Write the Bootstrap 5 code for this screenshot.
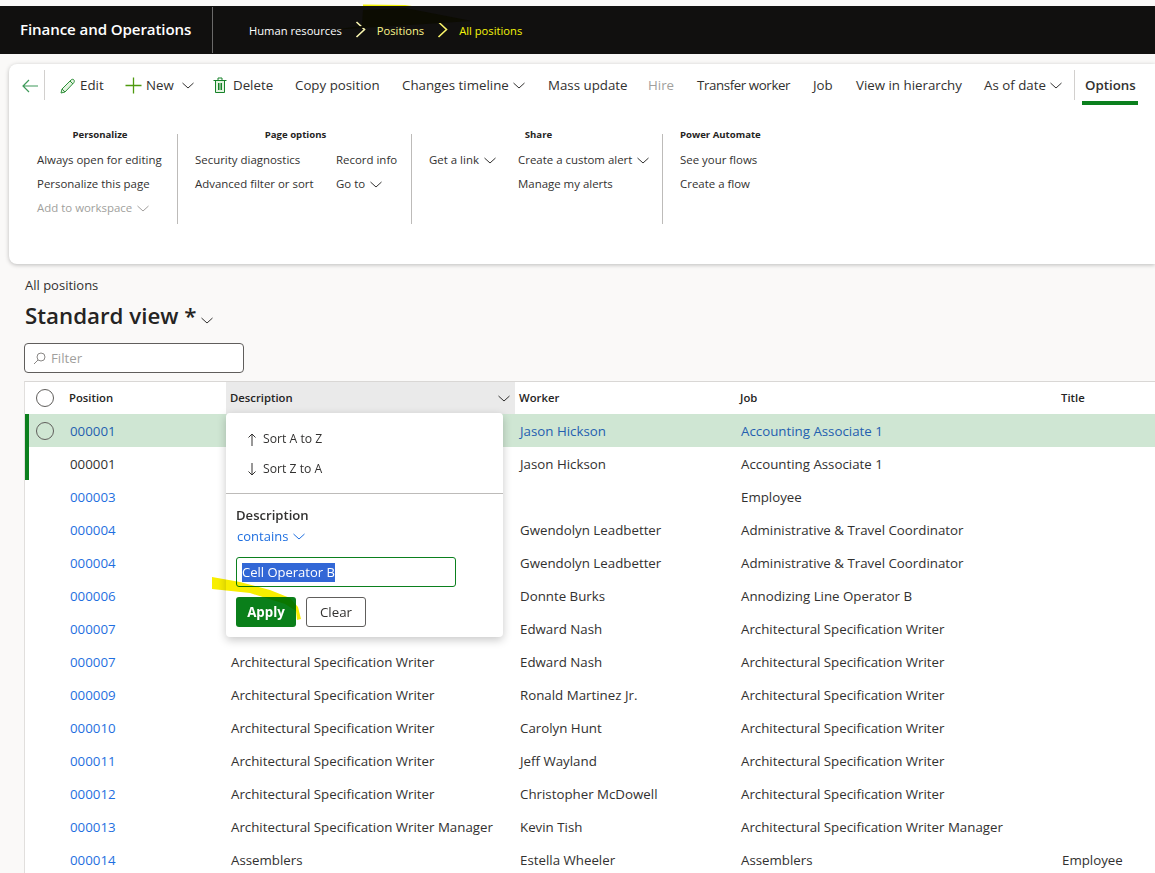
<!DOCTYPE html>
<html lang="en"><head><meta charset="utf-8"><title>All positions</title>
<link href="https://cdn.jsdelivr.net/npm/bootstrap@5.3.0/dist/css/bootstrap.min.css" rel="stylesheet">
<style>
html,body{height:873px;overflow:hidden}
body{background:#faf9f8;font-family:"Open Sans","Liberation Sans",sans-serif;color:#323130;font-size:13.3px;padding-top:6px;position:relative}
svg{display:block;flex:none}
.topbar{height:48px;background:#11100f;color:#fff;position:relative}
.brand{width:213px;height:46px;border-right:1px solid #6b6a69;padding-left:20px;font-size:15.1px;font-weight:600;line-height:44px;letter-spacing:-.1px}
.crumbs{padding-left:36px;font-size:11.2px;gap:11px}
.crumbs span{padding-top:2px}
.crumbs svg{margin-left:2px}
.crumb-mid{color:#fbf58a}.crumb-end{color:#f4f40a}
.smudge{position:absolute;left:0;top:-6px;pointer-events:none}
.ribbon{margin:10px 0 0 9px;height:200px;background:#fff;border-radius:8px 0 0 8px;box-shadow:0 1px 4px rgba(0,0,0,.25)}
.cmdbar{display:grid;grid-template-columns:22px 16px 65px 88px 82px 107px 146px 100px 49px 116px 43px 128px 90px 11px auto;justify-content:start;align-items:center;height:43px;padding-left:13px}
.cmd{display:flex;align-items:center;height:18px;white-space:nowrap;color:#323130}
.cmd-off{color:#a19f9d}
.gap6{gap:6px}
.tight{letter-spacing:-.4px}
.vsep{width:1px;background:#d2d0ce;height:30px;margin-bottom:2px}
.optcmd{position:relative;font-weight:600}
.optcmd::after{content:"";position:absolute;left:-3px;top:24px;width:56px;height:4px;background:#0b801e}
.groups{padding:27px 0 0 0;font-size:11.45px;height:100px}
.grp{border-right:1px solid #bdbbb9;height:90px;flex:none}
.grptitle{font-size:9.6px;font-weight:700;color:#252423;text-align:center;line-height:14px;height:20px;margin-top:-6px;white-space:nowrap}
.ritem{height:24px;line-height:20px;display:flex;align-items:center;gap:5px;white-space:nowrap}
.g-per{width:169px;padding-left:28px}.g-per .grptitle{width:126px}
.g-page{width:234px;padding-left:17px}.g-page .grptitle{width:201px}
.g-share{width:251px;padding-left:17px}.g-share .grptitle{width:219px}
.g-flow{padding-left:17px}.g-flow .grptitle{width:79px}
.col-a{width:141px}.col-b{width:89px}
.crumbtxt{font-size:13px;line-height:18px;padding:12px 0 0 25px;height:29px}
.pagehead{padding-left:25px;font-size:22.3px;font-weight:600;color:#252423;line-height:30px;margin-top:8px;height:30px;gap:5px}
.filterbox{margin:12px 0 0 24px;width:220px;height:30px;background:#fff;border:1px solid #605e5c;border-radius:4px;color:#a19f9d;padding:1px 0 0 8px;gap:5px}
.gridwrap{margin:8px 0 0 24px;background:#fff;border-left:1px solid #e1dfdd;border-top:1px solid #d9d7d5;position:relative}
.grow{display:grid;grid-template-columns:201px 289px 221px 321px 1fr;height:33px;align-items:center;white-space:nowrap;position:relative;padding-top:2px}
.ghead{height:32px;font-size:11.3px;font-weight:600;color:#252423;padding-top:0}
.ghead>div{height:100%;display:flex;align-items:center;padding-top:1px}
.hcell-pos{padding-left:44px;position:relative}
.hcell-desc{background:#eaeaea;padding:0 5px 0 4px;justify-content:space-between}
.hcell{padding-left:4px}
.gcell{padding-left:5px}
.gcell-pos{padding-left:45px}
.lnk{color:#1f6fe0}
.rsel{background:#cfe6d3}
.rsel .lnk{color:#245fb0}
.rbar::before{content:"";position:absolute;left:0;top:0;bottom:0;width:4px;background:#0b801e}
.ringh{position:absolute;left:11px;top:7px;width:18px;height:18px;border:1px solid #605e5c;border-radius:50%}
.ringr{position:absolute;left:11px;top:8px;width:18px;height:18px;border:1px solid #605e5c;border-radius:50%}
.popup{position:absolute;left:201px;top:31px;width:277px;height:224px;background:#fff;border-radius:4px;box-shadow:0 3px 10px rgba(0,0,0,.22);z-index:5;font-size:12.2px}
.sorts{height:81px;border-bottom:1px solid #bdbbb9;padding:11px 0 0 21px}
.sortrow{height:30px;display:flex;align-items:center;gap:6px;color:#323130}
.fbody{padding:13px 0 0 10px;position:relative}
.flabel{font-size:13.1px;font-weight:600;line-height:16px;color:#323130}
.fop{color:#1f6fe0;font-size:13px;line-height:17px;margin:5px 0 0 1px;gap:5px}
.finput{width:220px;height:30px;border:1px solid #0b801e;border-radius:3px;margin-top:12px;padding:1px 5px 0;font-size:13px;display:flex;align-items:center;background:#fff;color:#fff}
.finput span{background:#3267d6;line-height:19px}
.fbtn{height:30px;border-radius:3px;font-size:13.3px;padding:0;line-height:28px}
.fapply{width:60px;background:#0a7f1a;border:0;color:#fff;font-weight:700}
.fclear{width:60px;background:#fff;border:1px solid #605e5c;color:#323130}
.fbtns{margin-top:10px;gap:10px}
.swipe{position:absolute;left:-20px;top:160px;mix-blend-mode:multiply;z-index:6;pointer-events:none}
</style></head><body>
<div class="topbar d-flex align-items-center">
  <div class="brand">Finance and Operations</div>
  <div class="crumbs d-flex align-items-center">
    <span>Human resources</span>
    <svg width="11" height="17" viewBox="0 0 11 17"><path d="M1.500 1l8 7.500-8 7.500" fill="none" stroke="#fbf7b0" stroke-width="1.6"/></svg>
    <span class="crumb-mid">Positions</span>
    <svg width="11" height="17" viewBox="0 0 11 17"><path d="M1.500 1l8 7.500-8 7.500" fill="none" stroke="#fbf56a" stroke-width="1.6"/></svg>
    <span class="crumb-end">All positions</span>
  </div>
  <svg class="smudge" width="480" height="32" viewBox="0 0 480 32"><path d="M363 10L405 8 472 21 330 30 362 26Z" fill="#0c0c02"/><path d="M363 4.500L405 5 412 6H363Z" fill="#f2f000"/></svg>
</div>

<div class="ribbon">
  <div class="cmdbar">
    <span class="cmd"><svg width="17" height="14" viewBox="0 0 17 14"><path d="M16 7H1M7 1L1 7l6 6" fill="none" stroke="#3f9a5a" stroke-width="1.2"/></svg></span>
    <span class="vsep"></span>
    <span class="cmd gap-1"><svg width="16" height="16" viewBox="0 0 16 16"><path d="M1 15l1-4L11 2c1-1 2.500-1 3 0s.5 2-.5 3L5 14z" fill="#e3f3e0" stroke="#2f8f3a"/><path d="M2 11l3 3M10 3l3 3" fill="none" stroke="#2f8f3a"/></svg><span>Edit</span></span>
    <span class="cmd gap-1"><svg width="17" height="17" viewBox="0 0 17 17"><path d="M8.500 .5v16M.5 8.500h16" stroke="#4f9a10" stroke-width="1.300" fill="none"/></svg><span>New</span><svg class="ms-1" width="12" height="7" viewBox="0 0 12 7"><path d="M.5 1l5.500 5 5.500-5" fill="none" stroke="#323130"/></svg></span>
    <span class="cmd gap6"><svg width="14" height="17" viewBox="0 0 14 17"><path d="M2 3.500h10V15.500H2z" fill="#e3f3e0"/><path d="M.5 3.500h13M5 3V1h4v2M2.500 3.500v12h9v-12M5.500 6v7M7 6v7M8.500 6v7" fill="none" stroke="#17822a"/></svg><span>Delete</span></span>
    <span class="cmd">Copy position</span>
    <span class="cmd gap-1">Changes timeline<svg width="12" height="7" viewBox="0 0 12 7"><path d="M.5 1l5.500 5 5.500-5" fill="none" stroke="#323130"/></svg></span>
    <span class="cmd">Mass update</span>
    <span class="cmd cmd-off">Hire</span>
    <span class="cmd tight">Transfer worker</span>
    <span class="cmd">Job</span>
    <span class="cmd">View in hierarchy</span>
    <span class="cmd gap-1">As of date<svg width="12" height="7" viewBox="0 0 12 7"><path d="M.5 1l5.500 5 5.500-5" fill="none" stroke="#323130"/></svg></span>
    <span class="vsep"></span>
    <span class="cmd optcmd">Options</span>
  </div>
  <div class="groups d-flex">
    <div class="grp g-per"><div class="grptitle">Personalize</div>
      <div class="ritem">Always open for editing</div><div class="ritem">Personalize this page</div>
      <div class="ritem cmd-off">Add to workspace<svg width="12" height="7" viewBox="0 0 12 7"><path d="M.5 1l5.500 5 5.500-5" fill="none" stroke="#a19f9d"/></svg></div></div>
    <div class="grp g-page"><div class="grptitle">Page options</div>
      <div class="d-flex"><div class="col-a"><div class="ritem">Security diagnostics</div><div class="ritem">Advanced filter or sort</div></div>
      <div><div class="ritem">Record info</div><div class="ritem">Go to<svg width="12" height="7" viewBox="0 0 12 7"><path d="M.5 1l5.500 5 5.500-5" fill="none" stroke="#323130"/></svg></div></div></div></div>
    <div class="grp g-share"><div class="grptitle">Share</div>
      <div class="d-flex"><div class="col-b"><div class="ritem">Get a link<svg width="12" height="7" viewBox="0 0 12 7"><path d="M.5 1l5.500 5 5.500-5" fill="none" stroke="#323130"/></svg></div></div>
      <div><div class="ritem">Create a custom alert<svg width="12" height="7" viewBox="0 0 12 7"><path d="M.5 1l5.500 5 5.500-5" fill="none" stroke="#323130"/></svg></div><div class="ritem">Manage my alerts</div></div></div></div>
    <div class="g-flow"><div class="grptitle">Power Automate</div><div class="ritem">See your flows</div><div class="ritem">Create a flow</div></div>
  </div>
</div>

<div class="crumbtxt">All positions</div>
<div class="pagehead d-flex align-items-center"><span>Standard view *</span><svg class="mt-2" width="12" height="7" viewBox="0 0 12 7"><path d="M.5 1l5.500 5 5.500-5" fill="none" stroke="#323130"/></svg></div>
<div class="filterbox d-flex align-items-center"><svg width="13" height="13" viewBox="0 0 13 13"><circle cx="8" cy="5" r="4" fill="none" stroke="#8a8886"/><path d="M5 8l-4 4" stroke="#8a8886"/></svg><span>Filter</span></div>

<div class="gridwrap">
  <div class="grow ghead">
    <div class="hcell-pos"><span class="ringh"></span>Position</div>
    <div class="hcell-desc"><span>Description</span><svg width="12" height="7" viewBox="0 0 12 7"><path d="M.5 1l5.500 5 5.500-5" fill="none" stroke="#323130"/></svg></div>
    <div class="hcell">Worker</div><div class="hcell">Job</div><div class="hcell">Title</div>
  </div>
  <div class="grow rsel rbar"><span class="ringr"></span><div class="gcell-pos lnk">000001</div><div></div><div class="gcell lnk">Jason Hickson</div><div class="gcell lnk">Accounting Associate 1</div><div></div></div>
  <div class="grow rbar"><div class="gcell-pos">000001</div><div></div><div class="gcell">Jason Hickson</div><div class="gcell">Accounting Associate 1</div><div></div></div>
  <div class="grow"><div class="gcell-pos lnk">000003</div><div></div><div class="gcell"></div><div class="gcell">Employee</div><div></div></div>
  <div class="grow"><div class="gcell-pos lnk">000004</div><div></div><div class="gcell">Gwendolyn Leadbetter</div><div class="gcell">Administrative &amp; Travel Coordinator</div><div></div></div>
  <div class="grow"><div class="gcell-pos lnk">000004</div><div></div><div class="gcell">Gwendolyn Leadbetter</div><div class="gcell">Administrative &amp; Travel Coordinator</div><div></div></div>
  <div class="grow"><div class="gcell-pos lnk">000006</div><div></div><div class="gcell">Donnte Burks</div><div class="gcell">Annodizing Line Operator B</div><div></div></div>
  <div class="grow"><div class="gcell-pos lnk">000007</div><div></div><div class="gcell">Edward Nash</div><div class="gcell">Architectural Specification Writer</div><div></div></div>
  <div class="grow"><div class="gcell-pos lnk">000007</div><div class="gcell">Architectural Specification Writer</div><div class="gcell">Edward Nash</div><div class="gcell">Architectural Specification Writer</div><div></div></div>
  <div class="grow"><div class="gcell-pos lnk">000009</div><div class="gcell">Architectural Specification Writer</div><div class="gcell">Ronald Martinez Jr.</div><div class="gcell">Architectural Specification Writer</div><div></div></div>
  <div class="grow"><div class="gcell-pos lnk">000010</div><div class="gcell">Architectural Specification Writer</div><div class="gcell">Carolyn Hunt</div><div class="gcell">Architectural Specification Writer</div><div></div></div>
  <div class="grow"><div class="gcell-pos lnk">000011</div><div class="gcell">Architectural Specification Writer</div><div class="gcell">Jeff Wayland</div><div class="gcell">Architectural Specification Writer</div><div></div></div>
  <div class="grow"><div class="gcell-pos lnk">000012</div><div class="gcell">Architectural Specification Writer</div><div class="gcell">Christopher McDowell</div><div class="gcell">Architectural Specification Writer</div><div></div></div>
  <div class="grow"><div class="gcell-pos lnk">000013</div><div class="gcell">Architectural Specification Writer Manager</div><div class="gcell">Kevin Tish</div><div class="gcell">Architectural Specification Writer Manager</div><div></div></div>
  <div class="grow"><div class="gcell-pos lnk">000014</div><div class="gcell">Assemblers</div><div class="gcell">Estella Wheeler</div><div class="gcell">Assemblers</div><div class="gcell">Employee</div></div>

  <div class="popup">
    <div class="sorts">
      <div class="sortrow"><svg width="10" height="13" viewBox="0 0 10 13"><path d="M5 13V1M1.500 4.500L5 1l3.500 3.500" fill="none" stroke="#323130"/></svg>Sort A to Z</div>
      <div class="sortrow"><svg width="10" height="13" viewBox="0 0 10 13"><path d="M5 0v12M1.500 8.500L5 12l3.500-3.500" fill="none" stroke="#323130"/></svg>Sort Z to A</div>
    </div>
    <div class="fbody">
      <div class="flabel">Description</div>
      <div class="fop d-flex align-items-center">contains<svg width="12" height="7" viewBox="0 0 12 7"><path d="M.5 1l5.500 5 5.500-5" fill="none" stroke="#1f6fe0"/></svg></div>
      <div class="finput"><span>Cell Operator B</span></div>
      <div class="fbtns d-flex"><button type="button" class="fbtn fapply">Apply</button><button type="button" class="fbtn fclear">Clear</button></div>
    </div>
    <svg class="swipe" width="100" height="60" viewBox="0 0 100 60"><path d="M6 4L34 9 64 17 84 25 92 34 95 46 91 47 90 38 79 31 44 20 6 16Z" fill="#f8ee00"/></svg>
  </div>
</div>
</body></html>
